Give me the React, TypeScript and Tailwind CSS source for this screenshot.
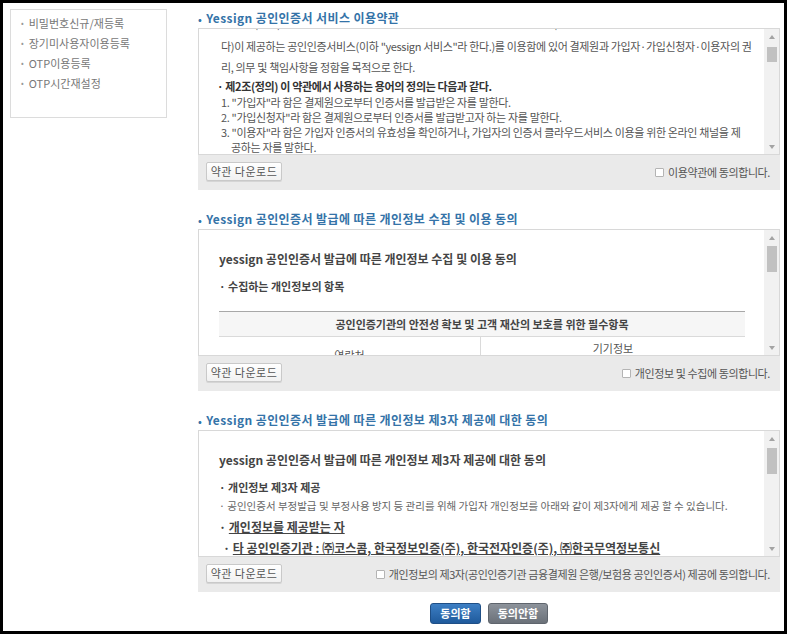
import React from 'react'

const font = "font-['Noto_Sans_CJK_KR','Noto_Sans',sans-serif]"

const sideMenu = ['비밀번호신규/재등록', '장기미사용자이용등록', 'OTP이용등록', 'OTP시간재설정']

function Scrollbar({ thumbTop, thumbHeight }: { thumbTop: string; thumbHeight: string }) {
  return (
    <div className="w-[15px] shrink-0 bg-[#f1f1f1] flex flex-col items-center">
      <div className="h-[15px] flex items-center justify-center">
        <div className="w-0 h-0 border-x-[3.5px] border-x-transparent border-b-[4px] border-b-[#a3a3a3]" />
      </div>
      <div className={`w-[10px] bg-[#c1c1c1] ${thumbTop} ${thumbHeight}`} />
      <div className="flex-1" />
      <div className="h-[15px] flex items-center justify-center">
        <div className="w-0 h-0 border-x-[3.5px] border-x-transparent border-t-[4px] border-t-[#a3a3a3]" />
      </div>
    </div>
  )
}

function Footer({ label }: { label: string }) {
  return (
    <div className="h-[35px] flex items-start justify-between pl-[8px] pr-[10px] pt-[7px]">
      <button className="w-[76px] h-[19px] rounded-[2px] border border-[#c9c9c9] bg-gradient-to-b from-white to-[#f1f1f1] shadow-[0_1px_0_#d5d5d5] text-[11px] leading-[17px] text-[#555] tracking-[0.5px]">
        약관 다운로드
      </button>
      <label className="flex items-center gap-[4px] mt-[3px] text-[11px] leading-[14px] text-[#555] tracking-[-0.4px] whitespace-nowrap">
        <span className="w-[9px] h-[9px] border border-[#b4b4b4] bg-white rounded-[1px]" />
        {label}
      </label>
    </div>
  )
}

function Section({
  title,
  label,
  thumbTop,
  thumbHeight,
  children,
}: {
  title: string
  label: string
  thumbTop: string
  thumbHeight: string
  children: React.ReactNode
}) {
  return (
    <section className="mb-[21px]">
      <h2 className="h-[16px] mb-[2px] text-[12px] leading-[16px] font-bold text-[#3473a8] tracking-[0.4px] whitespace-nowrap">
        <span className="text-[10px] mr-[4px]">•</span>
        {title}
      </h2>
      <div className="bg-[#eaeaea]">
        <div className="h-[127px] bg-white border border-[#d8d8d8] flex">
          <div className="flex-1 overflow-hidden">{children}</div>
          <Scrollbar thumbTop={thumbTop} thumbHeight={thumbHeight} />
        </div>
        <Footer label={label} />
      </div>
    </section>
  )
}

export default function App() {
  return (
    <div className={`w-[787px] h-[634px] bg-black p-[3px] ${font}`}>
      <div className="h-full bg-white flex">
        {/* left menu */}
        <aside className="ml-[7px] mt-[6px] w-[157px] h-[109px] border border-[#dcdcdc] pt-[3px] pl-[10px]">
          {sideMenu.map((item) => (
            <div key={item} className="h-[20px] flex items-center text-[11px] text-[#777] whitespace-nowrap">
              <span className="text-[8px] mr-[5px] text-[#999]">•</span>
              {item}
            </div>
          ))}
        </aside>

        <main className="ml-[31px] w-[582px] pt-[7px]">
          <Section
            title="Yessign 공인인증서 서비스 이용약관"
            label="이용약관에 동의합니다."
            thumbTop="mt-[3px]"
            thumbHeight="h-[15px]"
          >
            {/* content is scrolled: the first line sits above the visible area */}
            <div className="-mt-[14px] text-[11px] text-[#555] tracking-[-0.35px] whitespace-nowrap">
              <div className="pl-[22px] leading-[21px]">
                <p className="h-[21px] leading-[17px]">· 제1조(목적) 이 약관은 「전자서명법」 및 관련 법령에 의거하여 금융결제원(이하 "결제원"이라 한</p>
                <p>다)이 제공하는 공인인증서비스(이하 "yessign 서비스"라 한다.)를 이용함에 있어 결제원과 가입자·가입신청자·이용자의 권</p>
                <p>리, 의무 및 책임사항을 정함을 목적으로 한다.</p>
              </div>
              <p className="pl-[18px] leading-[17px] font-bold text-[#333]">· 제2조(정의) 이 약관에서 사용하는 용어의 정의는 다음과 같다.</p>
              <ol className="pl-[22px] leading-[15px]">
                <li>1. "가입자"라 함은 결제원으로부터 인증서를 발급받은 자를 말한다.</li>
                <li>2. "가입신청자"라 함은 결제원으로부터 인증서를 발급받고자 하는 자를 말한다.</li>
                <li>3. "이용자"라 함은 가입자 인증서의 유효성을 확인하거나, 가입자의 인증서 클라우드서비스 이용을 위한 온라인 채널을 제</li>
                <li className="pl-[10px]">공하는 자를 말한다.</li>
              </ol>
            </div>
          </Section>

          <Section
            title="Yessign 공인인증서 발급에 따른 개인정보 수집 및 이용 동의"
            label="개인정보 및 수집에 동의합니다."
            thumbTop="mt-[1px]"
            thumbHeight="h-[26px]"
          >
            <div className="pt-[19px] pl-[20px] whitespace-nowrap">
              <p className="leading-[20px] text-[12px] font-bold text-[#444]">yessign 공인인증서 발급에 따른 개인정보 수집 및 이용 동의</p>
              <p className="mt-[8px] leading-[18px] text-[11px] font-bold text-[#444]">· 수집하는 개인정보의 항목</p>
              <div className="mt-[16px] w-[526px] border-t border-t-[#a8a8a8] text-[11px] text-[#555]">
                <div className="h-[25px] bg-[#f6f6f6] border-b border-[#dadada] flex items-center justify-center font-bold text-[#444]">
                  공인인증기관의 안전성 확보 및 고객 재산의 보호를 위한 필수항목
                </div>
                <div className="flex h-[40px]">
                  <div className="w-[262px] border-r border-[#dadada] pt-[10px] text-center">연락처</div>
                  <div className="flex-1 pt-[3px] text-center">기기정보</div>
                </div>
              </div>
            </div>
          </Section>

          <Section
            title="Yessign 공인인증서 발급에 따른 개인정보 제3자 제공에 대한 동의"
            label="개인정보의 제3자(공인인증기관 금융결제원 은행/보험용 공인인증서) 제공에 동의합니다."
            thumbTop="mt-[2px]"
            thumbHeight="h-[26px]"
          >
            <div className="pt-[19px] pl-[20px] whitespace-nowrap text-[#444]">
              <p className="leading-[20px] text-[12px] font-bold">yessign 공인인증서 발급에 따른 개인정보 제3자 제공에 대한 동의</p>
              <p className="mt-[8px] leading-[18px] text-[11px] font-bold">· 개인정보 제3자 제공</p>
              <p className="mt-[1px] leading-[18px] text-[10.5px] text-[#666]">· 공인인증서 부정발급 및 부정사용 방지 등 관리를 위해 가입자 개인정보를 아래와 같이 제3자에게 제공 할 수 있습니다.</p>
              <p className="mt-[2px] leading-[20px] text-[12px] font-bold">
                · <span className="underline">개인정보를 제공받는 자</span>
              </p>
              <p className="mt-[1px] pl-[4px] leading-[20px] text-[12px] font-bold">
                · <span className="underline">타 공인인증기관 : ㈜코스콤, 한국정보인증(주), 한국전자인증(주), ㈜한국무역정보통신</span>
              </p>
            </div>
          </Section>

          <div className="-mt-[10px] flex justify-center gap-[7px]">
            <button className="w-[51px] h-[21px] rounded-[3px] border border-[#1f4f86] bg-gradient-to-b from-[#3d7fc4] to-[#1f5a9c] text-white text-[11px] font-bold leading-[19px]">
              동의함
            </button>
            <button className="w-[60px] h-[21px] rounded-[3px] border border-[#5f656d] bg-gradient-to-b from-[#8d939b] to-[#6b7179] text-white text-[11px] font-bold leading-[19px]">
              동의안함
            </button>
          </div>
        </main>
      </div>
    </div>
  )
}
